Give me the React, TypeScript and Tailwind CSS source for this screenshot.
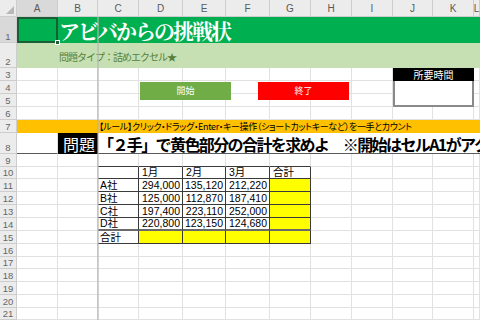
import React from 'react'

const letters = ['A', 'B', 'C', 'D', 'E', 'F', 'G', 'H', 'I', 'J', 'K', 'L']
const line = 'border-r border-b border-[#e1e1e1]'
const tbl = 'border-r border-b border-[#3a3a3a]'

function RowHead({ n, active = false }: { n: number; active?: boolean }) {
  return (
    <div
      className={`flex items-end justify-center pb-[1px] text-[9.5px] leading-none text-[#666] border-r border-b border-[#cdcdcd] ${
        active ? 'bg-[#d9d9d9]' : 'bg-[#ececec]'
      }`}
    >
      {n}
    </div>
  )
}

function Blanks({ count, cls = line }: { count: number; cls?: string }) {
  return (
    <>
      {Array.from({ length: count }).map((_, i) => (
        <div key={i} className={cls} />
      ))}
    </>
  )
}

const rows = [
  { name: 'A社', v: ['294,000', '135,120', '212,220'] },
  { name: 'B社', v: ['125,000', '112,870', '187,410'] },
  { name: 'C社', v: ['197,400', '223,110', '252,000'] },
  { name: 'D社', v: ['220,800', '123,150', '124,680'] },
]

export default function App() {
  return (
    <div className="relative w-[480px] h-[320px] overflow-hidden bg-white font-['Liberation_Sans','Noto_Sans_CJK_JP',sans-serif] text-black">
      <div className="grid grid-cols-[17px_41px_40px_41px_44px_43px_44px_41px_41px_41px_40px_41px_6px] grid-rows-[17px_26px_25px_13px_13px_13px_13px_13px_21px_13px_12px_13px_13px_13px_13px_13px_13px_12px_13px_13px_13px_12px]">
        {/* column headers */}
        <div className="relative bg-[#ececec] border-r border-b border-[#cdcdcd]">
          <svg width="17" height="17" className="absolute left-0 top-0">
            <polygon points="14,6 14,14 6,14" fill="#b8b8b8" />
          </svg>
        </div>
        {letters.map((l) => (
          <div
            key={l}
            className={`flex items-center justify-center text-[10px] text-[#5a5a5a] border-r border-b border-[#cdcdcd] ${
              l === 'A' ? 'bg-[#d9d9d9]' : 'bg-[#ececec]'
            }`}
          >
            {l}
          </div>
        ))}

        {/* row 1 */}
        <RowHead n={1} active />
        <div className="relative bg-[#00B050] border-2 border-[#1a5e36]">
          <div className="absolute right-[-4px] bottom-[-4px] w-[5px] h-[5px] bg-[#1a5e36] border border-white" />
        </div>
        <div className="col-span-11 bg-[#00B050] flex items-end pl-[1px] pb-[2px] whitespace-nowrap text-white text-[21px] font-bold leading-none tracking-[-2px] font-['Noto_Serif_CJK_JP','Noto_Sans_CJK_JP',serif]">
          アビバからの挑戦状
        </div>

        {/* row 2 */}
        <RowHead n={2} />
        <div className="col-span-12 bg-[#C6E0B4] flex items-center pl-[42px] pt-[2px] whitespace-nowrap text-[10px] tracking-[-1px] text-[#56803a] font-['Noto_Sans_CJK_JP',sans-serif]">
          問題タイプ：詰めエクセル★
        </div>

        {/* row 3 */}
        <RowHead n={3} />
        <Blanks count={9} />
        <div className="col-span-2 bg-black flex items-center justify-center text-white text-[10px] leading-none font-['Noto_Sans_CJK_JP',sans-serif]">
          所要時間
        </div>
        <div className={line} />

        {/* row 4-5 */}
        <RowHead n={4} />
        <Blanks count={9} />
        <div className="col-span-2 row-span-2 bg-white border-x-2 border-b-2 border-[#8a8a8a]" />
        <div className={line} />
        <RowHead n={5} />
        <Blanks count={9} />
        <div className={line} />

        {/* row 6 */}
        <RowHead n={6} />
        <Blanks count={12} />

        {/* row 7 */}
        <RowHead n={7} />
        <div className="col-span-12 bg-[#FFC000] flex items-center pl-[82px] whitespace-nowrap text-[9px] leading-none tracking-[-0.35px] [font-feature-settings:'palt'] font-['Noto_Sans_CJK_JP',sans-serif]">
          【ルール】クリック・ドラッグ・Enter・キー操作（ショートカットキーなど）を一手とカウント
        </div>

        {/* row 8 */}
        <RowHead n={8} />
        <div className="border-r border-[#e1e1e1] border-b border-b-[#5a5a5a]" />
        <div className="bg-black flex items-end justify-end pr-[3px] pb-[2px] text-white text-[16px] leading-none font-['Noto_Sans_CJK_JP',sans-serif]">
          問題
        </div>
        <div className="col-span-10 flex items-end pb-[1px] overflow-hidden whitespace-nowrap border-b border-[#5a5a5a] text-[16px] font-bold leading-none tracking-[-1.6px] font-['Noto_Sans_CJK_JP',sans-serif]">
          「２手」で黄色部分の合計を求めよ　※開始はセルA1がアクティブ
        </div>

        {/* row 9 */}
        <RowHead n={9} />
        <Blanks count={2} />
        <Blanks count={5} cls="border-r border-[#e1e1e1] border-b border-b-[#3a3a3a]" />
        <Blanks count={5} />

        {/* row 10 */}
        <RowHead n={10} />
        <Blanks count={2} />
        <div className={tbl} />
        {['1月', '2月', '3月', '合計'].map((h) => (
          <div key={h} className={`${tbl} flex items-end pl-[3px] text-[10.5px] leading-none pb-[1px]`}>
            {h}
          </div>
        ))}
        <Blanks count={5} />

        {/* rows 11-14 */}
        {rows.map((r, i) => (
          <React.Fragment key={r.name}>
            <RowHead n={11 + i} />
            <Blanks count={2} />
            <div
              className={`border-r border-[#3a3a3a] flex items-end pl-[2px] pb-[1px] text-[10.5px] leading-none ${
                i === 3 ? 'border-b-2 border-b-[#6a6a6a]' : 'border-b'
              }`}
            >
              {r.name}
            </div>
            {r.v.map((v) => (
              <div
                key={v}
                className={`border-r border-[#3a3a3a] flex items-end justify-end pr-[2px] pb-[1px] text-[10.5px] leading-none ${
                  i === 3 ? 'border-b-2 border-b-[#6a6a6a]' : 'border-b'
                }`}
              >
                {v}
              </div>
            ))}
            <div
              className={`bg-[#FFFF00] border-r border-[#3a3a3a] ${
                i === 3 ? 'border-b-2 border-b-[#6a6a6a]' : 'border-b'
              }`}
            />
            <Blanks count={5} />
          </React.Fragment>
        ))}

        {/* row 15 */}
        <RowHead n={15} />
        <Blanks count={2} />
        <div className={`${tbl} flex items-end pl-[2px] pb-[1px] text-[10.5px] leading-none`}>合計</div>
        <Blanks count={4} cls={`${tbl} bg-[#FFFF00]`} />
        <Blanks count={5} />

        {/* rows 16-21 */}
        {[16, 17, 18, 19, 20, 21].map((n) => (
          <React.Fragment key={n}>
            <RowHead n={n} />
            <Blanks count={12} />
          </React.Fragment>
        ))}
      </div>

      {/* freeze pane line */}
      <div className="absolute left-[97px] top-[17px] w-[2px] h-[303px] bg-[#b4b4b4]/60" />

      {/* shape buttons */}
      <div className="absolute left-[140px] top-[82px] w-[91px] h-[18px] bg-[#70AD47] flex items-center justify-center text-white text-[9px] font-['Noto_Sans_CJK_JP',sans-serif]">
        開始
      </div>
      <div className="absolute left-[258px] top-[82px] w-[91px] h-[18px] bg-[#FF0000] flex items-center justify-center text-white text-[9px] font-['Noto_Sans_CJK_JP',sans-serif]">
        終了
      </div>
    </div>
  )
}
